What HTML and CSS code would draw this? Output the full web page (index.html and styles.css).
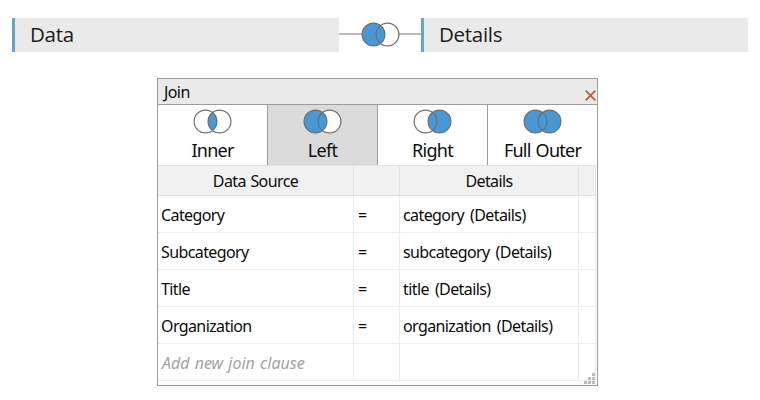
FILE: index.html
```
<!DOCTYPE html>
<html lang="en">
<head>
<meta charset="utf-8">
<title>Join</title>
<link rel="stylesheet" href="styles.css">
</head>
<body>
<svg class="defs" width="0" height="0">
  <defs>
    <path id="lens" d="M19.5 3.38A11.4 11.4 0 0 1 19.5 21.62A11.4 11.4 0 0 1 19.5 3.38Z"/>
    <g id="rings"><circle cx="12.5" cy="12.5" r="11.4"/><circle cx="26.5" cy="12.5" r="11.4"/></g>
  </defs>
</svg>
<div class="canvas">
  <div class="source"><span>Data</span></div>
  <div class="link">
    <svg class="venn" viewBox="0 0 39 25"><circle class="off" cx="26.5" cy="12.5" r="11.4"/><circle class="on" cx="12.5" cy="12.5" r="11.4"/><use class="ring" href="#rings"/></svg>
  </div>
  <div class="source"><span>Details</span></div>
</div>
<div class="dialog">
  <div class="titlebar"><span>Join</span>
    <svg class="close" viewBox="0 0 11 11"><path d="M0.7 0.7L10.3 10.3M10.3 0.7L0.7 10.3"/></svg>
  </div>
  <div class="tabs">
    <div class="tab"><svg class="venn" viewBox="0 0 39 25"><use class="off" href="#rings"/><use class="on" href="#lens"/><use class="ring" href="#rings"/></svg><span>Inner</span></div>
    <div class="tab selected"><svg class="venn" viewBox="0 0 39 25"><use class="off" href="#rings"/><circle class="on" cx="12.5" cy="12.5" r="11.4"/><use class="ring" href="#rings"/></svg><span>Left</span></div>
    <div class="tab"><svg class="venn" viewBox="0 0 39 25"><use class="off" href="#rings"/><circle class="on" cx="26.5" cy="12.5" r="11.4"/><use class="ring" href="#rings"/></svg><span>Right</span></div>
    <div class="tab"><svg class="venn" viewBox="0 0 39 25"><use class="on" href="#rings"/><use class="ring" href="#rings"/></svg><span>Full Outer</span></div>
  </div>
  <div class="grid">
    <div class="row head"><div>Data Source</div><div></div><div>Details</div><div></div></div>
    <div class="row"><div>Category</div><div class="op">=</div><div>category (Details)</div><div></div></div>
    <div class="row"><div>Subcategory</div><div class="op">=</div><div>subcategory (Details)</div><div></div></div>
    <div class="row"><div>Title</div><div class="op">=</div><div>title (Details)</div><div></div></div>
    <div class="row"><div>Organization</div><div class="op">=</div><div>organization (Details)</div><div></div></div>
    <div class="row"><div class="hint">Add new join clause</div><div></div><div></div><div></div></div>
  </div>
  <svg class="grip" viewBox="0 0 11 11"><path d="M8 0h3v3h-3zM4 4h3v3h-3zM8 4h3v3h-3zM0 8h3v3h-3zM4 8h3v3h-3zM8 8h3v3h-3z"/></svg>
</div>
</body>
</html>
```

FILE: styles.css
```
* { box-sizing: border-box; }
body {
  margin: 0;
  height: 400px;
  overflow: hidden;
  background: #fff;
  color: #0c0c0c;
  font-family: "Noto Sans", "Open Sans", sans-serif;
  font-size: 16px;
  letter-spacing: -0.6px;
  word-spacing: 2.5px;
}
.defs { position: absolute; }
.canvas { display: flex; padding: 18px 12px 0; height: 52px; }
.source {
  width: 327px;
  height: 34px;
  line-height: 33px;
  padding-left: 15px;
  border-left: 3px solid #62a6c9;
  background: #eaeaea;
  font-family: "Open Sans", sans-serif;
  font-size: 20.5px;
  letter-spacing: -0.3px;
  color: #1b1b1b;
}
.link {
  width: 82px;
  display: flex;
  padding-left: 22px;
  background: linear-gradient(#bababa, #bababa) 0 15px / 100% 2px no-repeat;
}
.venn { display: block; flex: none; width: 39px; height: 25px; }
.link .venn { margin-top: 4px; }
.on { fill: #4898d3; }
.off { fill: #fff; }
.ring { fill: none; stroke: #6d6d6d; stroke-width: 1.2; }
.dialog {
  position: relative;
  width: 441px;
  height: 308px;
  margin: 26px 0 0 157px;
  border: 1px solid #9c9c9c;
}
.titlebar {
  display: flex;
  justify-content: space-between;
  height: 26px;
  line-height: 26px;
  padding-left: 6px;
  border-bottom: 1px solid #9c9c9c;
  background: #eaeaea;
}
.close { width: 11px; height: 11px; margin: 11px 1px 0 0; fill: none; stroke: #bd5d43; stroke-width: 1.8; }
.tabs { display: grid; grid-template-columns: repeat(3, 110px) 1fr; grid-template-rows: 100%; height: 60px; }
.tab {
  display: flex;
  flex-direction: column;
  align-items: center;
  padding: 4px 0 0;
  border-right: 1px solid #9c9c9c;
  font-size: 18px;
  letter-spacing: -0.75px;
  word-spacing: 1px;
  line-height: 32px;
}
.tab .venn { margin-right: 1px; }
.tab:last-child { border-right: 0; }
.selected { background: #dbdbdb; }
.grid { margin-right: 1px; border-top: 1px solid #e2e2e2; }
.row { display: grid; grid-template-columns: 196px 46px 179px 1fr; grid-template-rows: 100%; height: 37px; line-height: 38px; white-space: nowrap; }
.row > div { padding-left: 3px; border-right: 1px solid #ececec; border-bottom: 1px solid #ececec; }
.row > .op { padding-left: 4px; }
.row.head { height: 30px; line-height: 31px; background: #f1f1f1; text-align: center; word-spacing: 1px; }
.row.head > div { padding: 0; border-color: #e2e2e2; }
.row .hint { padding-left: 4px; color: #a3a3a3; font-style: italic; letter-spacing: 0; word-spacing: 1px; }
.grip { position: absolute; right: 2px; bottom: 1px; width: 11px; height: 11px; fill: #bcbcbc; }
```
